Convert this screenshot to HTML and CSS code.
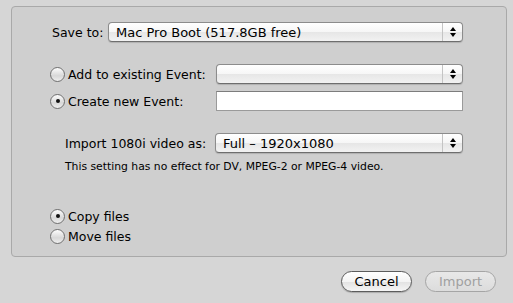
FILE: index.html
```html
<!DOCTYPE html>
<html lang="en">
<head>
    <meta charset="UTF-8">
    <title>Import</title>
    <link rel="stylesheet" href="styles.css">
</head>
<body>
    <div class="dialog">
        <div class="box">
            <div class="row save-row">
                <span class="save-label">Save to:</span>
                <div class="popup">
                    <span class="popup-text">Mac Pro Boot (517.8GB free)</span>
                    <span class="popup-arrows"><i class="up"></i><i class="down"></i></span>
                </div>
            </div>

            <div class="row event-row">
                <label class="radio-label"><span class="radio"></span>Add to existing Event:</label>
                <div class="popup">
                    <span class="popup-text"></span>
                    <span class="popup-arrows"><i class="up"></i><i class="down"></i></span>
                </div>
            </div>

            <div class="row new-row">
                <label class="radio-label"><span class="radio on"></span>Create new Event:</label>
                <div class="field"></div>
            </div>

            <div class="row video-row">
                <span class="video-label">Import 1080i video as:</span>
                <div class="popup">
                    <span class="popup-text">Full – 1920x1080</span>
                    <span class="popup-arrows"><i class="up"></i><i class="down"></i></span>
                </div>
            </div>
            <p class="note">This setting has no effect for DV, MPEG-2 or MPEG-4 video.</p>

            <div class="files">
                <label class="radio-label"><span class="radio on"></span>Copy files</label>
                <label class="radio-label"><span class="radio"></span>Move files</label>
            </div>
        </div>

        <div class="buttons">
            <button class="btn">Cancel</button>
            <button class="btn disabled">Import</button>
        </div>
    </div>
</body>
</html>
```

FILE: styles.css
```css
* {
    margin: 0;
    padding: 0;
    box-sizing: border-box;
}

body {
    background: #d6d6d6;
    font-family: "DejaVu Sans", sans-serif;
    font-size: 12.5px;
    color: #000;
}

.dialog {
    width: 513px;
    height: 303px;
    padding: 6px 6px 0 11px;
}

/* grouped area */
.box {
    height: 251px;
    border: 1px solid #a9a9a9;
    border-radius: 4px;
    background: #cfcfcf;
    padding: 15px 43px 0 37px;
}

.row {
    display: flex;
    align-items: center;
    height: 20px;
}

.save-label {
    width: 59px;
    flex-shrink: 0;
    white-space: nowrap;
    padding-left: 3px;
}

.event-row {
    margin-top: 22px;
}

.new-row {
    margin-top: 7px;
}

.radio-label {
    display: flex;
    align-items: center;
    width: 167px;
    height: 20px;
    flex-shrink: 0;
    white-space: nowrap;
}

.radio {
    width: 15px;
    height: 15px;
    border-radius: 50%;
    border: 1px solid #6f6f6f;
    background: linear-gradient(#fdfdfd, #d8d8d8 60%, #eeeeee);
    margin: 0 3px 0 1px;
    position: relative;
    flex-shrink: 0;
}

.radio.on::after {
    content: "";
    position: absolute;
    left: 4.5px;
    top: 4.5px;
    width: 4px;
    height: 4px;
    border-radius: 50%;
    background: #111;
}

.popup {
    flex: 1;
    display: flex;
    align-items: center;
    height: 20px;
    border: 1px solid #8c8c8c;
    border-bottom-color: #6e6e6e;
    border-radius: 4px;
    background: linear-gradient(#ffffff, #f6f6f6 50%, #e6e6e6 51%, #f2f2f2);
    box-shadow: 0 1px 1px rgba(0, 0, 0, 0.15);
}

.popup-text {
    flex: 1;
    padding-left: 7px;
    font-size: 13px;
    white-space: nowrap;
}

.popup-arrows {
    width: 20px;
    height: 18px;
    border-left: 1px solid #c4c4c4;
    display: flex;
    flex-direction: column;
    align-items: center;
    justify-content: center;
    gap: 2px;
}

.popup-arrows i {
    width: 0;
    height: 0;
    border-left: 3px solid transparent;
    border-right: 3px solid transparent;
}

.popup-arrows .up {
    border-bottom: 4px solid #000;
}

.popup-arrows .down {
    border-top: 4px solid #000;
}

.field {
    flex: 1;
    height: 20px;
    background: #fff;
    border: 1px solid #9a9a9a;
    border-top-color: #7d7d7d;
}

.video-row {
    margin-top: 22px;
    padding-left: 16px;
}

.video-label {
    width: 150px;
    flex-shrink: 0;
    white-space: nowrap;
}

.note {
    font-size: 10.8px;
    padding-left: 16px;
    margin-top: 7px;
}

.files {
    margin-top: 33px;
}

.buttons {
    display: flex;
    justify-content: flex-end;
    gap: 13px;
    padding: 14px 11px 0 0;
}

.btn {
    width: 71px;
    height: 21px;
    border: 1px solid #5c5c5c;
    border-radius: 11px;
    background: linear-gradient(#ffffff, #f4f4f4 50%, #e2e2e2 51%, #f5f5f5);
    font-family: "DejaVu Sans", sans-serif;
    font-size: 13px;
    color: #000;
    box-shadow: 0 1px 1px rgba(0, 0, 0, 0.2);
}

.btn.disabled {
    border-color: #a5a5a5;
    color: #a0a0a0;
    background: linear-gradient(#e8e8e8, #dcdcdc);
    box-shadow: none;
}
```
